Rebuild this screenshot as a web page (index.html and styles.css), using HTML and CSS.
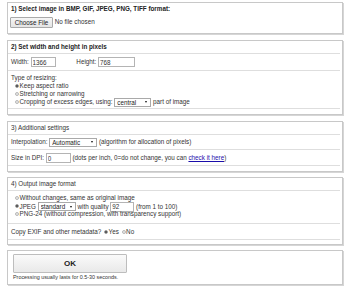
FILE: index.html
```html
<!DOCTYPE html>
<html lang="en">
  <head>
    <title>Resize image</title>
    <meta charset="utf-8">
    <meta name="viewport" content="width=device-width, initial-scale=1">
    <link rel="stylesheet" href="styles.css">
  </head>
  <body>
    <main class="page">

      <section class="box box-file">
        <div class="head bold">1) Select image in BMP, GIF, JPEG, PNG, TIFF format:</div>
        <div class="file-row">
          <button type="button" class="file-btn">Choose File</button>
          <span>No file chosen</span>
        </div>
      </section>

      <section class="box box-size">
        <div class="head bold">2) Set width and height in pixels</div>
        <div class="row size-row">
          Width: <input class="txt txt-w" value="1366">
          <span class="h-label">Height:</span> <input class="txt txt-h" value="768">
        </div>
        <div class="row resize-row">
          <div>Type of resizing:</div>
          <label class="opt"><input type="radio" name="resize" checked>Keep aspect ratio</label>
          <label class="opt"><input type="radio" name="resize">Stretching or narrowing</label>
          <label class="opt"><input type="radio" name="resize">Cropping of excess edges, using:
            <span class="sel sel-crop"><select><option>central</option></select></span> part of image</label>
        </div>
      </section>

      <section class="box box-extra">
        <div class="head">3) Additional settings</div>
        <div class="row interp-row">
          Interpolation: <span class="sel sel-interp"><select><option>Automatic</option></select></span>
          (algorithm for allocation of pixels)
        </div>
        <div class="row dpi-row">
          Size in DPI: <input class="txt txt-dpi" value="0">
          (dots per inch, 0=do not change, you can <a href="#">check it here</a>)
        </div>
      </section>

      <section class="box box-format">
        <div class="head">4) Output image format</div>
        <div class="row format-row">
          <label class="opt"><input type="radio" name="format">Without changes, same as original image</label>
          <label class="opt"><input type="radio" name="format" checked>JPEG
            <span class="sel sel-jpeg"><select><option>standard</option></select></span>
            with quality <input class="txt txt-q" value="92"> (from 1 to 100)</label>
          <label class="opt"><input type="radio" name="format">PNG-24 (without compression, with transparency support)</label>
        </div>
        <div class="row exif-row">
          Copy EXIF and other metadata?
          <label class="inline-opt"><input type="radio" name="exif" checked>Yes</label>
          <label class="inline-opt"><input type="radio" name="exif">No</label>
        </div>
      </section>

      <section class="box box-submit">
        <button type="submit" class="ok-btn">OK</button>
        <div class="note">Processing usually lasts for 0.5-30 seconds.</div>
      </section>

    </main>
  </body>
</html>
```

FILE: styles.css
```css
body {
  margin: 0;
  font-family: "Liberation Sans", Arial, sans-serif;
  font-size: 6.3px;
  line-height: 8px;
  color: #333;
  background: white;
}

.page {
  padding: 2px 0 0 7px;
  width: 336px;
}

.box {
  border: 1px solid #c8c8c8;
  box-shadow: 1px 1px 0 #d6d6d6;
  margin: 0 0 6px 0;
}

.bold {
  font-weight: bold;
  color: #222;
}

.head {
  line-height: 12px;
  padding: 0 0 0 3px;
  margin: 0 2px 0 0;
  border-bottom: 1px solid #dedede;
}

.box-file .head {
  border-bottom: none;
}

.row {
  padding: 0 0 0 3px;
  margin: 0 2px 0 0;
  border-bottom: 1px solid #dedede;
  white-space: nowrap;
}

input,
select,
button {
  vertical-align: middle;
}

/* box 1 */
.file-row {
  line-height: 11px;
  padding: 1px 0 5px 2px;
}

.file-btn {
  font-family: inherit;
  font-size: 6.3px;
  height: 11px;
  width: 43px;
  padding: 0;
  margin: 0;
  color: #222;
  background: linear-gradient(#f6f6f6, #e4e4e4);
  border: 1px solid #a9a9a9;
  border-radius: 1px;
}

/* box 2 */
.box-size,
.box-extra {
  padding-bottom: 5px;
}

.size-row {
  line-height: 16px;
}

.txt {
  font-family: inherit;
  font-size: 6.3px;
  height: 10px;
  box-sizing: border-box;
  padding: 0 1px;
  margin: 0;
  border: 1px solid #b4b4b4;
  color: #333;
  background: white;
}

.txt-w {
  width: 25px;
}

.h-label {
  margin: 0 0 0 19px;
}

.txt-h {
  width: 37px;
}

.resize-row {
  padding-top: 3px;
  padding-bottom: 2px;
}

.opt {
  display: block;
  height: 8px;
  line-height: 8px;
}

input[type="radio"] {
  appearance: none;
  width: 4px;
  height: 4px;
  margin: -1px 0.5px 0 4px;
  border-radius: 50%;
  border: 0.5px solid #b8b8b8;
  background: #e8e8e8;
  box-sizing: border-box;
}

input[type="radio"]:checked {
  background: radial-gradient(circle, #444 0 1px, #dcdcdc 1.2px);
  border-color: #999;
}

.sel {
  position: relative;
  display: inline-block;
  vertical-align: middle;
  line-height: 0;
}

.sel select {
  appearance: none;
  font-family: inherit;
  font-size: 6.3px;
  line-height: 7px;
  height: 9px;
  margin: 0;
  padding: 0 0 0 2px;
  border: 1px solid #a9a9a9;
  border-radius: 0;
  background: white;
  color: #222;
  box-sizing: border-box;
  display: block;
}

.sel::after {
  content: "";
  position: absolute;
  right: 4px;
  top: 3.5px;
  border-left: 1.5px solid transparent;
  border-right: 1.5px solid transparent;
  border-top: 2px solid #111;
}

.sel-crop select {
  width: 37px;
}

.sel-interp select {
  width: 48px;
}

.sel-jpeg select {
  width: 38px;
}

/* box 3 */
.box-extra {
  margin-bottom: 5px;
}

.interp-row {
  line-height: 14px;
}

.dpi-row {
  line-height: 15px;
}

.txt-dpi {
  width: 25px;
}

a {
  color: #1a0dab;
}

/* box 4 */
.box-format {
  padding-bottom: 4px;
  margin-bottom: 5px;
}

.format-row {
  padding-top: 3px;
  padding-bottom: 5px;
}

.txt-q {
  width: 24px;
}

.exif-row {
  line-height: 15px;
}

.inline-opt input[type="radio"] {
  margin-left: 1px;
}

/* box 5 */
.box-submit {
  padding: 3px 0 2px 5px;
}

.ok-btn {
  display: block;
  width: 114px;
  height: 19px;
  padding: 0;
  font-family: inherit;
  font-size: 8px;
  font-weight: bold;
  color: #222;
  background: linear-gradient(#fafafa, #e9e9e9);
  border: 1px solid #bdbdbd;
  border-radius: 1px;
}

.note {
  font-size: 5.4px;
  line-height: 9px;
  color: #333;
}
```
